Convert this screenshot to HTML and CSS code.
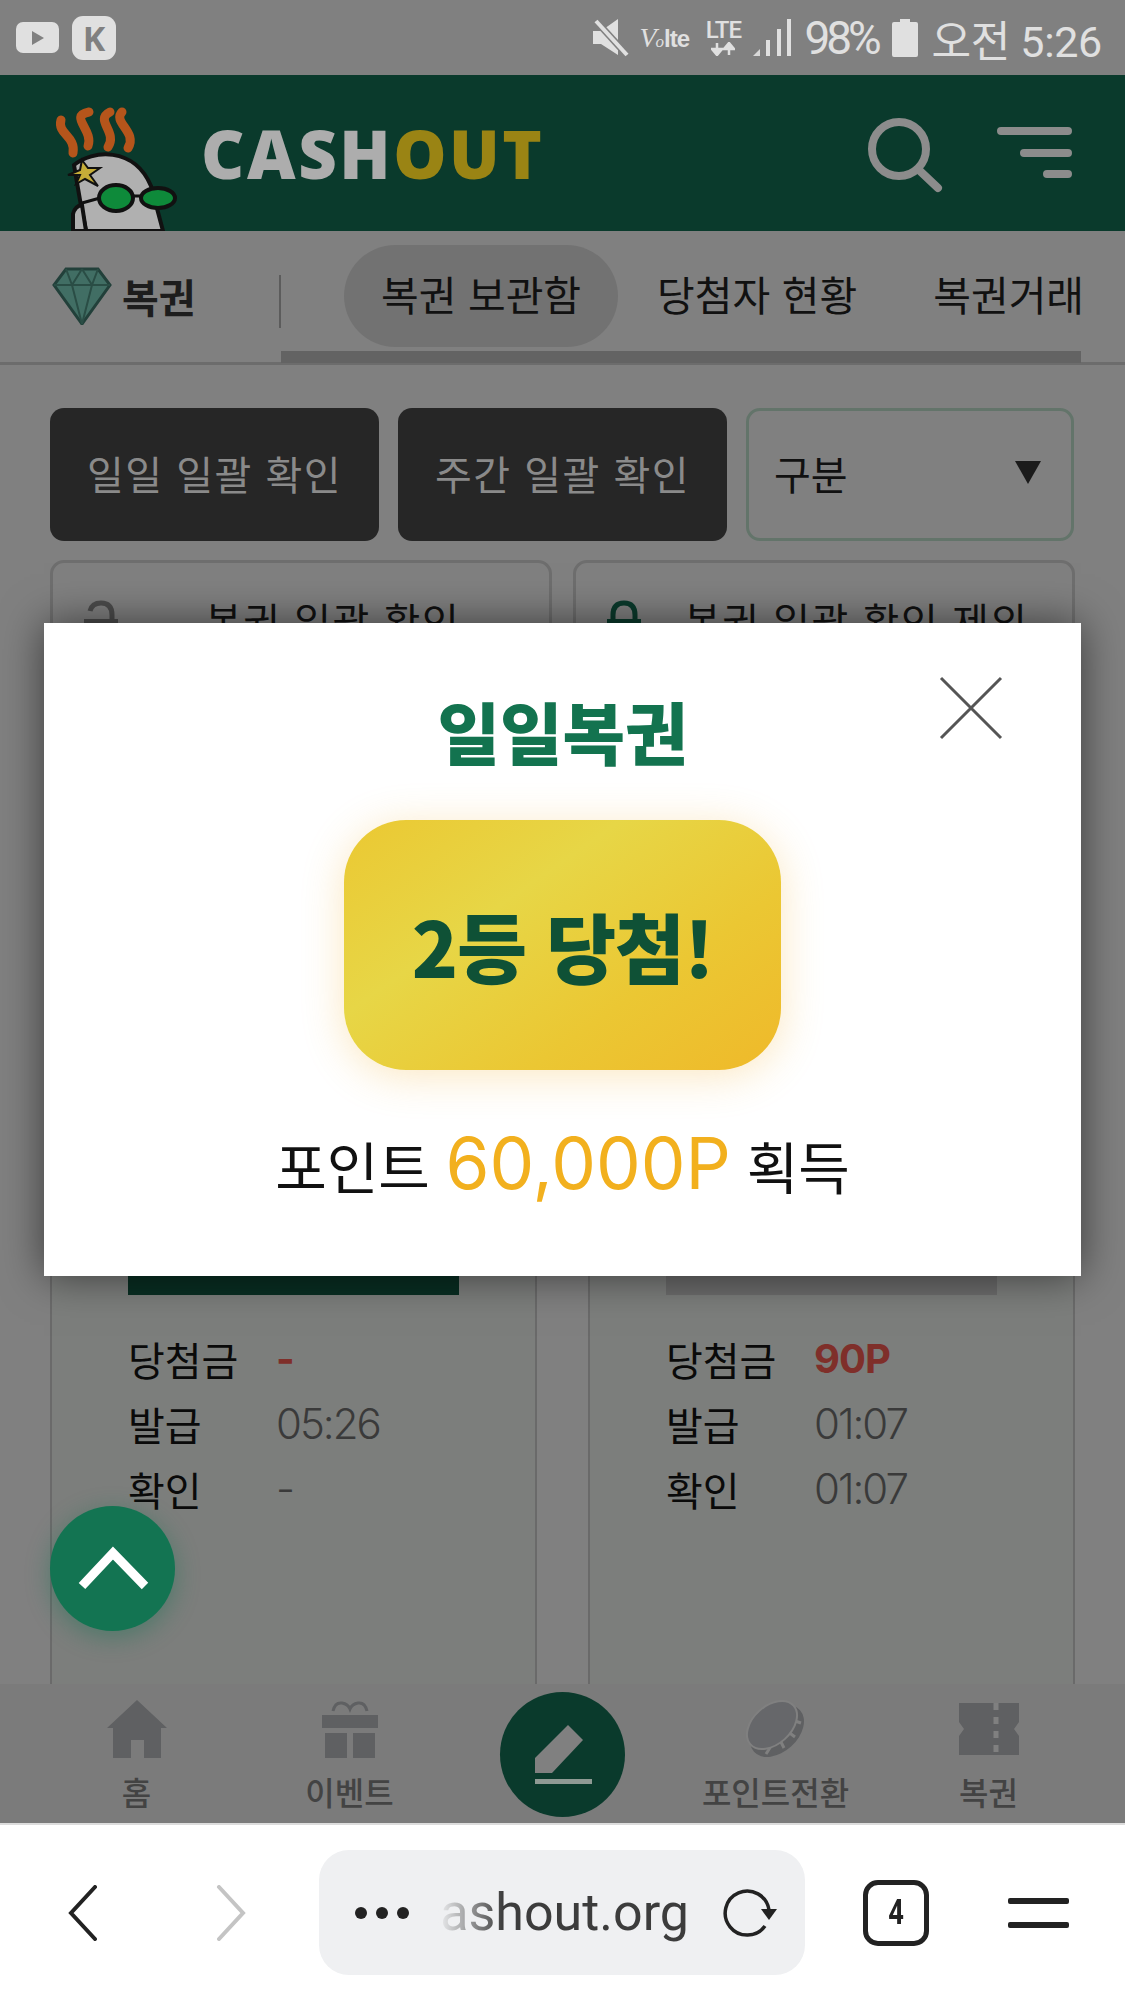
FILE: index.html
```html
<!DOCTYPE html>
<html lang="ko">
<head>
    <meta charset="UTF-8" />
    <title>CASHOUT 복권</title>
    <link rel="stylesheet" href="styles.css">
</head>
<body>
    <div class="status-bar">
        <div class="app-yt"><svg width="14" height="16" viewBox="0 0 14 16"><path d="M1 1L13 8L1 15Z" fill="#808080"/></svg></div>
        <div class="app-k">K</div>
        <div class="status-right">
            <svg class="st-mute" width="36" height="38" viewBox="0 0 36 38">
                <path d="M0 12H8L25 0V36L8 25H0Z" fill="#e0e0e0"/>
                <path d="M3 2L34 36" stroke="#808080" stroke-width="7"/>
                <path d="M3 2L34 36" stroke="#e0e0e0" stroke-width="4"/>
            </svg>
            <div class="st-volte"><i>V</i><em>o</em><b>lte</b></div>
            <div class="st-lte">
                <span>LTE</span>
                <svg width="24" height="14" viewBox="0 0 24 14"><path d="M6 1V8M1 7H11L6 13ZM18 13V6M13 7H23L18 1Z" stroke="#e0e0e0" stroke-width="2.5" fill="#e0e0e0"/></svg>
            </div>
            <svg class="st-signal" width="38" height="38" viewBox="0 0 38 38">
                <path d="M0 37L7 30V37Z" fill="#d8d8d8"/>
                <rect x="13" y="21" width="4" height="16" fill="#e0e0e0"/>
                <rect x="24" y="10" width="4" height="27" fill="#e0e0e0"/>
                <rect x="34" y="0" width="4" height="37" fill="#e0e0e0"/>
            </svg>
            <span class="st-batt-text">98%</span>
            <svg class="st-battery" width="26" height="38" viewBox="0 0 26 38"><path d="M8 0H18V3H24Q26 3 26 5V36Q26 38 24 38H2Q0 38 0 36V5Q0 3 2 3H8Z" fill="#e0e0e0"/></svg>
            <span class="st-time">오전 5:26</span>
        </div>
    </div>

    <header class="top-header">
        <svg class="mascot" width="150" height="141" viewBox="0 0 150 141">
            <g fill="none" stroke="#b5551b" stroke-width="9" stroke-linecap="round">
                <path d="M31 30C27 44 46 46 43 63"/>
                <path d="M59 22C38 26 64 40 58 56"/>
                <path d="M80 22C64 30 88 42 78 57"/>
                <path d="M92 22C82 32 108 42 98 58"/>
            </g>
            <path d="M44 75C62 60 104 56 121 96L133 141H56L50 110Z" fill="#b0b0b0" stroke="#111" stroke-width="4"/>
            <path d="M43 141V124Q45 116 52 115L56 141Z" fill="#b0b0b0" stroke="#111" stroke-width="4"/>
            <path d="M52 70L58 78L70 78L60 85L68 96L55 89L46 94L50 85L38 85L50 80Z" fill="#c6ad38" stroke="#111" stroke-width="2"/>
            <path d="M52 113L70 108" stroke="#111" stroke-width="3"/>
            <ellipse cx="86" cy="108" rx="17" ry="13" fill="#0e8a3a" stroke="#111" stroke-width="4"/>
            <ellipse cx="128" cy="108" rx="17" ry="10" fill="#0e8a3a" stroke="#111" stroke-width="4"/>
            <path d="M103 106H111" stroke="#111" stroke-width="3"/>
        </svg>
        <div class="brand">CASH<span>OUT</span></div>
        <div class="header-icons">
            <svg width="85" height="85" viewBox="0 0 85 85" fill="none" stroke="#8c8c8c" stroke-width="8" stroke-linecap="round">
                <circle cx="39" cy="38" r="27"/>
                <path d="M60 60L78 77"/>
            </svg>
            <svg width="82" height="60" viewBox="0 0 82 60" fill="none" stroke="#8c8c8c" stroke-width="8" stroke-linecap="round">
                <path d="M7 8H74M30 30H74M53 51H74"/>
            </svg>
        </div>
    </header>

    <div class="tab-bar">
        <div class="tab-title">
            <svg width="60" height="58" viewBox="0 0 60 58">
                <path d="M14 2H46L58 18L30 57L2 18Z" fill="#416e64" stroke="#22403a" stroke-width="3"/>
                <path d="M2 18H58M14 2L20 18L30 57L40 18L46 2M30 2L20 18M30 2L40 18" fill="none" stroke="#2a4d45" stroke-width="2"/>
            </svg>
            <span>복권</span>
        </div>
        <div class="tab-list">
            <div class="tab active">복권 보관함</div>
            <div class="tab">당첨자 현황</div>
            <div class="tab">복권거래</div>
        </div>
        <div class="tab-scroll"></div>
    </div>

    <main class="content">
        <div class="btn-row">
            <div class="btn-dark">일일 일괄 확인</div>
            <div class="btn-dark">주간 일괄 확인</div>
            <div class="select-box"><span>구분</span><i class="select-arrow"></i></div>
        </div>
        <div class="lock-row">
            <div class="lock-btn">
                <svg width="36" height="50" viewBox="0 0 36 50" fill="none"><path d="M7 11Q9 3 18 3Q29 3 29 15V22" stroke="#4c4c4c" stroke-width="5"/><rect x="1" y="19" width="34" height="30" fill="#4c4c4c"/></svg>
                <span class="lock-text-a">복권 일괄 확인</span>
            </div>
            <div class="lock-btn">
                <svg width="36" height="50" viewBox="0 0 36 50" fill="none"><path d="M7 22V15Q7 3 18 3Q29 3 29 15V22" stroke="#0a3a2c" stroke-width="5"/><rect x="1" y="19" width="34" height="30" fill="#0a3a2c"/></svg>
                <span class="lock-text-b">복권 일괄 확인 제외</span>
            </div>
        </div>
        <div class="cards">
            <div class="card">
                <div class="card-bar green"></div>
                <div class="card-row"><b>당첨금</b><span class="red">-</span></div>
                <div class="card-row"><b>발급</b><span>05:26</span></div>
                <div class="card-row"><b>확인</b><span>-</span></div>
            </div>
            <div class="card">
                <div class="card-bar"></div>
                <div class="card-row"><b>당첨금</b><span class="red">90P</span></div>
                <div class="card-row"><b>발급</b><span>01:07</span></div>
                <div class="card-row"><b>확인</b><span>01:07</span></div>
            </div>
        </div>
    </main>

    <nav class="bottom-nav">
        <div class="nav-item">
            <svg width="60" height="58" viewBox="0 0 60 58"><path d="M30 0L60 28H54V58H37V40H24V58H6V28H0Z" fill="#5f6062"/></svg>
            <span>홈</span>
        </div>
        <div class="nav-item">
            <svg width="56" height="58" viewBox="0 0 56 58" fill="#5f6062"><path d="M11 11Q13 2 20 3Q26 4 28 9Q30 4 36 3Q43 2 45 11" fill="none" stroke="#5f6062" stroke-width="3"/><rect y="15" width="56" height="13"/><rect x="3" y="33" width="22" height="25"/><rect x="31" y="33" width="22" height="25"/></svg>
            <span>이벤트</span>
        </div>
        <div class="nav-center">
            <svg width="125" height="125" viewBox="0 0 125 125">
                <path d="M68 33L83 48L52 81H35V66Z" fill="#808080"/>
                <rect x="35" y="87" width="57" height="5" fill="#8f9a94"/>
            </svg>
        </div>
        <div class="nav-item">
            <svg width="60" height="58" viewBox="0 0 60 58">
                <ellipse cx="31" cy="31" rx="31" ry="21" transform="rotate(-42 31 31)" fill="#5f6062"/>
                <path d="M20 54L27 43M38 48L33 38M49 37L41 31M55 23L46 20" stroke="#808080" stroke-width="3"/>
                <ellipse cx="26" cy="25" rx="29" ry="19" transform="rotate(-42 26 25)" fill="#66676a" stroke="#808080" stroke-width="2"/>
            </svg>
            <span>포인트전환</span>
        </div>
        <div class="nav-item">
            <svg width="60" height="58" viewBox="0 0 60 58"><path d="M0 3H60V22L55 29L60 36V55H0V36L5 29L0 22Z" fill="#5f6062"/><path d="M37 3V55" stroke="#808080" stroke-width="5" stroke-dasharray="7 7"/></svg>
            <span>복권</span>
        </div>
    </nav>

    <div class="browser-bar">
        <svg class="nav-arrow" width="30" height="56" viewBox="0 0 30 56" fill="none" stroke="#222" stroke-width="4" stroke-linecap="round"><path d="M27 2L3 28L27 54"/></svg>
        <svg class="nav-arrow forward" width="30" height="56" viewBox="0 0 30 56" fill="none" stroke="#c4c4c4" stroke-width="4" stroke-linecap="round"><path d="M3 2L27 28L3 54"/></svg>
        <div class="url-box">
            <span class="url-dots"><i></i><i></i><i></i></span>
            <div class="url-text">cashout.org</div>
            <svg width="56" height="50" viewBox="0 0 56 50" fill="none"><path d="M43 38A22 22 0 1 1 47 22" stroke="#222" stroke-width="3.5"/><path d="M39 21H55L47 32Z" fill="#222"/></svg>
        </div>
        <div class="tab-count"><span>4</span></div>
        <div class="browser-menu"><i></i><i></i></div>
    </div>

    <!-- 팝업 -->
    <div class="fab">
        <svg width="125" height="125" viewBox="0 0 125 125" fill="none" stroke="#fff" stroke-width="9"><path d="M32 80L63 47L95 80"/></svg>
    </div>
    <div class="modal">
        <h2 class="modal-title">일일복권</h2>
        <svg class="modal-close" width="64" height="64" viewBox="0 0 64 64" stroke="#555" stroke-width="3"><path d="M2 2L62 62M62 2L2 62"/></svg>
        <div class="prize">2등 당첨!</div>
        <p class="prize-text">포인트 <span>60,000P</span> 획득</p>
    </div>
</body>
</html>
```
FILE: styles.css
```css
html, body {
    margin: 0;
    padding: 0;
}

body {
    position: relative;
    display: flex;
    flex-direction: column;
    width: 1125px;
    height: 2000px;
    overflow: hidden;
    background-color: #808080;
    font-family: "Noto Sans CJK KR", "Noto Sans", sans-serif;
    color: #000;
}

/* STATUS BAR */
.status-bar {
    display: flex;
    align-items: center;
    flex: 0 0 75px;
    padding-left: 16px;
    box-sizing: border-box;
    color: #e0e0e0;
}

.app-yt {
    display: flex;
    align-items: center;
    justify-content: center;
    width: 43px;
    height: 31px;
    background: #e0e0e0;
    border-radius: 7px;
}

.app-k {
    display: flex;
    align-items: center;
    justify-content: center;
    width: 44px;
    height: 44px;
    margin-left: 13px;
    background: #e0e0e0;
    border-radius: 11px;
    color: #808080;
    font: bold 34px "Open Sans", sans-serif;
}

.status-right {
    display: flex;
    align-items: center;
    margin-left: auto;
    padding-right: 23px;
}

.st-volte {
    display: flex;
    align-items: baseline;
    margin-left: 10px;
    width: 50px;
    font: bold 24px "Liberation Sans", sans-serif;
    letter-spacing: -1px;
}

.st-volte i {
    font: italic 28px "Liberation Serif", serif;
}

.st-volte em {
    font: italic 17px "Liberation Serif", serif;
    margin-right: 1px;
}

.st-lte {
    display: flex;
    flex-direction: column;
    align-items: center;
    margin-left: 14px;
    width: 40px;
    font: 500 24px/22px "Roboto", sans-serif;
    letter-spacing: -1px;
}

.st-lte svg {
    margin-top: 1px;
}

.st-signal {
    margin-left: 10px;
}

.st-batt-text {
    margin-left: 13px;
    font: 46px "Roboto", sans-serif;
    letter-spacing: -4px;
    width: 86px;
}

.st-battery {
    margin-left: 2px;
}

.st-time {
    margin-left: 13px;
    font: 43px "Roboto", "Noto Sans CJK KR", sans-serif;
    letter-spacing: -0.3px;
}

/* HEADER */
.top-header {
    display: flex;
    align-items: center;
    flex: 0 0 156px;
    padding: 0 49px 0 30px;
    box-sizing: border-box;
    background: #0a3a2c;
}

.mascot {
    align-self: flex-end;
    flex: none;
}

.brand {
    margin-left: 21px;
    font: 800 67px/1 "Open Sans", sans-serif;
    letter-spacing: 2.5px;
    color: #adadad;
}

.brand span {
    color: #9a8414;
}

.header-icons {
    display: flex;
    align-items: center;
    margin-left: auto;
    gap: 49px;
}

/* TABS */
.tab-bar {
    position: relative;
    display: flex;
    align-items: flex-start;
    flex: 0 0 134px;
    padding-top: 14px;
    box-sizing: border-box;
    border-bottom: 3px solid #6c6c6c;
}

.tab-title {
    display: flex;
    align-items: center;
    gap: 10px;
    box-sizing: border-box;
    width: 281px;
    height: 102px;
    padding-left: 52px;
    font-size: 40px;
    font-weight: 700;
    color: #1d1d1d;
    position: relative;
}

.tab-title::after {
    content: '';
    position: absolute;
    right: 0;
    top: 30px;
    height: 53px;
    width: 2px;
    background: #5c5c5c;
}

.tab-title span {
    line-height: 1;
}

.tab-list {
    display: flex;
    gap: 2px;
    margin-left: 63px;
    white-space: nowrap;
}

.tab {
    padding: 0 37px;
    height: 102px;
    line-height: 96px;
    font-size: 41px;
    color: #111;
}

.tab.active {
    background: #727272;
    border-radius: 51px;
}

.tab-scroll {
    position: absolute;
    left: 281px;
    right: 44px;
    bottom: -1px;
    height: 12px;
    background: #636363;
}

/* CONTENT */
.content {
    flex: 1;
    min-height: 0;
    padding: 43px 50px 0 50px;
    overflow: hidden;
}

.btn-row {
    display: grid;
    grid-template-columns: 329px 329px 328px;
    gap: 19px;
    height: 133px;
}

.btn-dark {
    display: flex;
    align-items: center;
    justify-content: center;
    padding-bottom: 4px;
    box-sizing: border-box;
    background: #262626;
    border-radius: 14px;
    color: #8a8a8a;
    font-size: 40px;
    letter-spacing: 1.5px;
}

.select-box {
    display: flex;
    align-items: center;
    justify-content: space-between;
    box-sizing: border-box;
    padding: 0 30px 4px 25px;
    border: 3px solid #63746a;
    border-radius: 14px;
    font-size: 40px;
    color: #111;
}

.select-arrow {
    width: 0;
    height: 0;
    border-left: 13px solid transparent;
    border-right: 13px solid transparent;
    border-top: 23px solid #1b1b1b;
}

.lock-row {
    display: grid;
    grid-template-columns: 502px 502px;
    gap: 21px;
    margin-top: 19px;
    height: 130px;
}

.lock-btn {
    display: flex;
    align-items: flex-start;
    box-sizing: border-box;
    padding: 37px 0 0 30px;
    border: 3px solid #6e6e6e;
    border-radius: 14px;
    font-size: 40px;
    letter-spacing: 1.5px;
    color: #111;
}

.lock-btn span {
    line-height: 1;
}

.lock-text-a {
    margin-left: 86px;
}

.lock-text-b {
    margin-left: 42px;
}

.cards {
    display: grid;
    grid-template-columns: 487px 487px;
    gap: 51px;
    margin-top: 19px;
    height: 1000px;
}

.card {
    box-sizing: border-box;
    padding: 0 0 0 76px;
    border: 2px solid #6a6a6a;
    background: #7c7e7c;
}

.card-bar {
    width: 331px;
    height: 584px;
    margin-bottom: 31px;
    background: #6c6c6c;
}

.card-bar.green {
    background: #082e22;
}

.card-row {
    display: flex;
    align-items: center;
    height: 65px;
    font-size: 40px;
}

.card-row b {
    width: 148px;
    font-weight: 400;
    color: #0a0a0a;
}

.card-row span {
    font: 300 42px "Inter", sans-serif;
    letter-spacing: -2px;
    color: #3a3a3a;
}

.card-row span.red {
    font-weight: 700;
    font-size: 40px;
    letter-spacing: -1px;
    color: #7f2f2a;
}

/* BOTTOM NAV */
.bottom-nav {
    display: grid;
    grid-template-columns: repeat(5, 213px);
    flex: 0 0 139px;
    padding: 0 30px;
    box-sizing: border-box;
    background: #7b7b7b;
    position: relative;
}

.nav-item {
    display: flex;
    flex-direction: column;
    align-items: center;
    padding-top: 16px;
    color: #434343;
    font-size: 32px;
    font-weight: 500;
    white-space: nowrap;
}

.nav-item span {
    line-height: 1;
    margin-top: 17px;
}

.nav-center {
    align-self: start;
    justify-self: center;
    width: 125px;
    height: 125px;
    margin-top: 8px;
    border-radius: 50%;
    background: #0a3a2c;
}

/* BROWSER BAR */
.browser-bar {
    display: flex;
    align-items: center;
    flex: 0 0 177px;
    box-sizing: border-box;
    padding-left: 68px;
    background: #fff;
    border-top: 2px solid #dcdcdc;
}

.nav-arrow.forward {
    margin-left: 118px;
}

.url-box {
    display: flex;
    align-items: center;
    box-sizing: border-box;
    width: 486px;
    height: 125px;
    margin-left: 73px;
    padding-left: 36px;
    background: #eff0f2;
    border-radius: 30px;
}

.url-dots {
    display: flex;
    gap: 9px;
    flex: none;
}

.url-dots i {
    width: 12px;
    height: 12px;
    border-radius: 50%;
    background: #222;
}

/* la "c" queda oculta por el degradado, igual que en la barra real */
.url-text {
    flex: none;
    width: 280px;
    white-space: nowrap;
    text-align: right;
    font: 52px "Roboto", sans-serif;
    color: #3c3c3c;
    -webkit-mask-image: linear-gradient(to right, transparent 29px, #000 94px);
    mask-image: linear-gradient(to right, transparent 29px, #000 94px);
}

.url-box svg {
    flex: none;
    margin-left: 33px;
}

.tab-count {
    display: flex;
    align-items: center;
    justify-content: center;
    box-sizing: border-box;
    width: 66px;
    height: 66px;
    margin-left: 58px;
    border: 5px solid #222;
    border-radius: 15px;
    font: bold 35px "Roboto", sans-serif;
    color: #222;
}

.tab-count span {
    transform: scaleX(0.78);
}

.browser-menu {
    display: flex;
    flex-direction: column;
    gap: 18px;
    margin-left: 79px;
}

.browser-menu i {
    display: block;
    width: 61px;
    height: 6px;
    border-radius: 2px;
    background: #222;
}

/* FAB + MODAL */
.fab {
    position: absolute;
    left: 50px;
    top: 1506px;
    width: 125px;
    height: 125px;
    border-radius: 50%;
    background: #137452;
    box-shadow: 0 6px 24px rgba(19, 116, 82, 0.45);
}

.modal {
    position: absolute;
    left: 44px;
    top: 623px;
    display: flex;
    flex-direction: column;
    align-items: center;
    box-sizing: border-box;
    width: 1037px;
    height: 653px;
    background: #fff;
    box-shadow: 0 0 40px rgba(0, 0, 0, 0.55);
}

.modal-title {
    margin: 63px 0 0;
    font-size: 68px;
    font-weight: 900;
    line-height: 90px;
    color: #13734f;
}

.modal-close {
    position: absolute;
    right: 78px;
    top: 53px;
}

.prize {
    display: flex;
    align-items: center;
    justify-content: center;
    width: 437px;
    height: 250px;
    margin-top: 44px;
    border-radius: 62px;
    background: linear-gradient(145deg, #ebc832 0%, #e7d646 35%, #ebc733 68%, #efb92a 100%);
    box-shadow: 0 6px 42px rgba(243, 176, 50, 0.3);
    font-size: 76px;
    font-weight: 900;
    letter-spacing: -1px;
    color: #0f5136;
}

.prize-text {
    margin: 50px 0 0;
    font-size: 56px;
    line-height: 90px;
    white-space: nowrap;
    color: #111;
}

.prize-text span {
    font: 71px "Inter", sans-serif;
    color: #f2b01e;
}
```
